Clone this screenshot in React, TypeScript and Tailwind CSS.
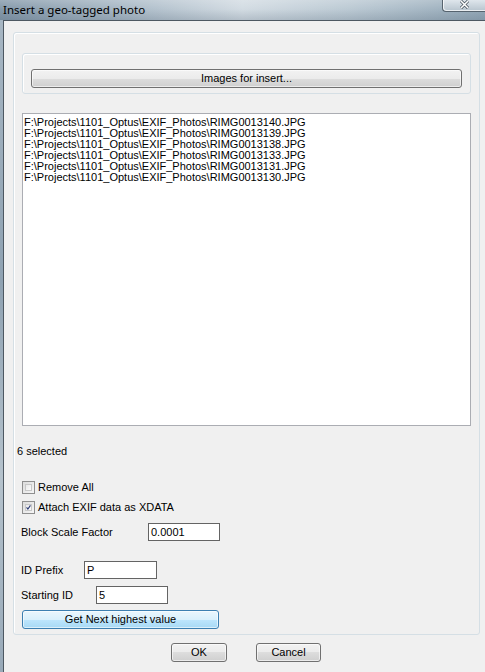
const FILES = [
  "F:\\Projects\\1101_Optus\\EXIF_Photos\\RIMG0013140.JPG",
  "F:\\Projects\\1101_Optus\\EXIF_Photos\\RIMG0013139.JPG",
  "F:\\Projects\\1101_Optus\\EXIF_Photos\\RIMG0013138.JPG",
  "F:\\Projects\\1101_Optus\\EXIF_Photos\\RIMG0013133.JPG",
  "F:\\Projects\\1101_Optus\\EXIF_Photos\\RIMG0013131.JPG",
  "F:\\Projects\\1101_Optus\\EXIF_Photos\\RIMG0013130.JPG",
];

const font = "font-['Liberation_Sans',Arial,sans-serif]";

function Checkbox({ checked }: { checked?: boolean }) {
  return (
    <div className="flex h-[13px] w-[13px] items-center justify-center border border-[#8f8f8f] bg-[linear-gradient(135deg,#dcdcdc,#f6f6f6)] p-[2px]">
      <div className="flex h-full w-full items-center justify-center border border-[#c8c8c8] bg-[linear-gradient(135deg,#e9e9e9,#fbfbfb)]">
        {checked && (
          <svg width="9" height="9" viewBox="0 0 9 9">
            <path d="M1 4.3 L3.4 7.2 L8 0.8" fill="none" stroke="#2b3a74" strokeWidth="2" />
          </svg>
        )}
      </div>
    </div>
  );
}

function Button({ label, className = "", blue }: { label: string; className?: string; blue?: boolean }) {
  const skin = blue
    ? "border-[#3c7fb1] bg-[linear-gradient(to_bottom,#eaf6fd_0%,#d9f0fc_50%,#bee6fd_50%,#a7d9f5_100%)]"
    : "border-[#707070] bg-[linear-gradient(to_bottom,#f2f2f2_0%,#ebebeb_50%,#dddddd_50%,#cfcfcf_100%)]";
  return (
    <div
      className={`flex h-[19px] items-center justify-center rounded-[3px] border text-[11px] text-black shadow-[inset_0_0_0_1px_rgba(255,255,255,0.6)] ${skin} ${className}`}
    >
      {label}
    </div>
  );
}

function Field({ value, className = "" }: { value: string; className?: string }) {
  return (
    <div className={`flex h-[18px] items-center border border-[#646464] bg-white pl-[2px] text-[11px] text-black ${className}`}>
      {value}
    </div>
  );
}

export default function App() {
  return (
    <div className={`relative flex h-[672px] w-[485px] flex-col overflow-hidden bg-[linear-gradient(to_right,#8599aa,#a9b9c6_25%,#d3dce3_50%,#bccad4_72%,#95a9b8)] ${font}`}>
      {/* title bar */}
      <div className="flex h-[20px] shrink-0 items-center pl-[3px] bg-[linear-gradient(to_bottom,rgba(255,255,255,0.2),rgba(255,255,255,0)_45%,rgba(60,80,100,0.2))]">
        <span className="font-['Noto_Sans',sans-serif] text-[11.5px] text-black">Insert a geo-tagged photo</span>
      </div>
      <div className="absolute right-0 top-0 flex h-[12px] w-[43px] items-start justify-center rounded-bl-[4px] border-b border-l border-[#56636e] bg-[linear-gradient(to_bottom,#dfe6ec,#b7c4ce)] shadow-[inset_1px_-1px_0_rgba(255,255,255,0.7)]">
        <svg width="11" height="9" viewBox="0 0 11 9">
          <path d="M2 1 L9 8 M9 1 L2 8" stroke="#3f4a55" strokeWidth="3" />
          <path d="M2 1 L9 8 M9 1 L2 8" stroke="#ffffff" strokeWidth="1.6" />
        </svg>
      </div>

      {/* frame + client */}
      <div className="flex flex-1">
        <div className="w-[3px] shrink-0 bg-[linear-gradient(to_bottom,#a7b6c3,#8fa2b2_40%,#b5c2cc_70%,#98a9b8)]" />
        <div className="flex flex-1 flex-col border-l border-t border-[#4d5862] bg-[#f0f0f0]">
          {/* outer group box */}
          <div className="ml-[9px] mt-[11px] flex w-[467px] flex-col rounded-[3px] border border-[#d5dfe5] pb-[5px] shadow-[inset_1px_1px_0_#ffffff]">
            <div className="mx-[8px] mt-[20px] flex h-[41px] flex-col rounded-[3px] border border-[#d5dfe5] px-[8px] pt-[15px] shadow-[inset_1px_1px_0_#ffffff]">
              <Button label="Images for insert..." className="w-full" />
            </div>

            <div className="mx-[8px] mt-[19px] h-[313px] border border-[#abadb3] bg-white pl-[1px] pt-[3px] text-[11px] leading-[11px] text-black">
              {FILES.map((f) => (
                <div key={f} className="whitespace-nowrap">
                  {f}
                </div>
              ))}
            </div>

            <div className="ml-[3px] mt-[19px] text-[11px] leading-[13px] text-black">6 selected</div>

            <div className="ml-[8px] mt-[23px] flex h-[13px] items-center gap-[3px] text-[11px] text-black">
              <Checkbox />
              <span>Remove All</span>
            </div>
            <div className="ml-[8px] mt-[7px] flex h-[13px] items-center gap-[3px] text-[11px] text-black">
              <Checkbox checked />
              <span>Attach EXIF data as XDATA</span>
            </div>

            <div className="ml-[7px] mt-[9px] flex items-center text-[11px] text-black">
              <span className="w-[127px]">Block Scale Factor</span>
              <Field value="0.0001" className="w-[72px]" />
            </div>

            <div className="ml-[7px] mt-[20px] flex items-center text-[11px] text-black">
              <span className="w-[63px]">ID Prefix</span>
              <Field value="P" className="w-[73px]" />
            </div>

            <div className="ml-[7px] mt-[7px] flex items-center text-[11px] text-black">
              <span className="w-[75px]">Starting ID</span>
              <Field value="5" className="w-[72px]" />
            </div>

            <Button label="Get Next highest value" blue className="ml-[8px] mt-[6px] w-[197px]" />
          </div>

          {/* OK / Cancel */}
          <div className="mt-[8px] flex">
            <Button label="OK" className="ml-[167px] w-[56px]" />
            <Button label="Cancel" className="ml-[29px] w-[65px]" />
          </div>
        </div>
      </div>
    </div>
  );
}
